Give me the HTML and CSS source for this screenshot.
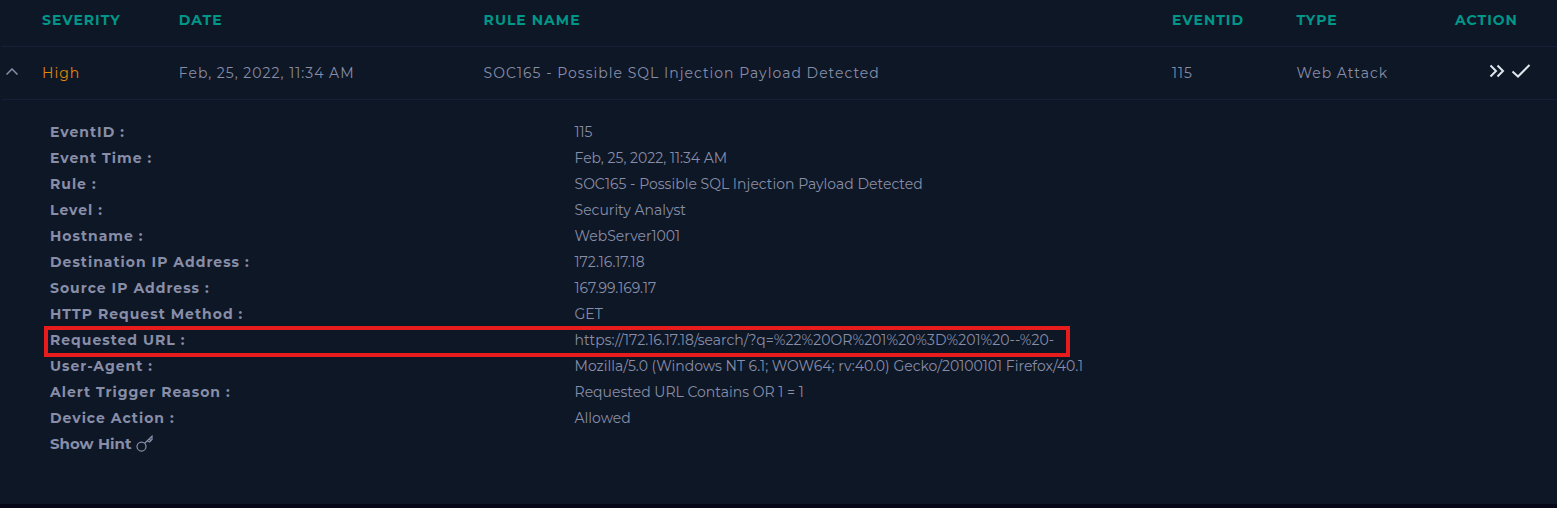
FILE: index.html
```html
<!DOCTYPE html>
<html lang="en">
<head>
<meta charset="utf-8">
<title>Alerts</title>
<link rel="stylesheet" href="styles.css">
</head>
<body>
<main class="panel">
  <table class="alerts">
    <colgroup>
      <col class="col-toggle"><col class="col-severity"><col class="col-date"><col class="col-rule"><col class="col-id"><col class="col-type"><col class="col-action">
    </colgroup>
    <thead>
      <tr>
        <th></th><th>SEVERITY</th><th>DATE</th><th>RULE NAME</th><th>EVENTID</th><th>TYPE</th><th>ACTION</th>
      </tr>
    </thead>
    <tbody>
      <tr class="alert-row">
        <td class="toggle-cell"><button class="icon-button" aria-label="Collapse" aria-expanded="true"><svg width="12" height="8" viewBox="0 0 12 8"><path d="M.5 6.500 6 1l5.500 5.500" /></svg></button></td>
        <td class="high">High</td>
        <td>Feb, 25, 2022, 11:34 AM</td>
        <td>SOC165 - Possible SQL Injection Payload Detected</td>
        <td>115</td>
        <td>Web Attack</td>
        <td>
          <div class="actions">
            <button class="icon-button" aria-label="Take ownership"><svg width="16" height="14" viewBox="0 0 16 14"><path d="M1.500 1.500 7 7l-5.500 5.500M8.500 1.500 14 7l-5.500 5.500" /></svg></button>
            <button class="icon-button" aria-label="Close alert"><svg width="20" height="14" viewBox="0 0 20 14"><path d="M1.500 7.500 7 12.500 18.500 1" /></svg></button>
          </div>
        </td>
      </tr>
    </tbody>
  </table>
  <section class="details">
    <dl class="fields">
      <div class="field"><dt>EventID :</dt><dd>115</dd></div>
      <div class="field"><dt>Event Time :</dt><dd>Feb, 25, 2022, 11:34 AM</dd></div>
      <div class="field"><dt>Rule :</dt><dd>SOC165 - Possible SQL Injection Payload Detected</dd></div>
      <div class="field"><dt>Level :</dt><dd>Security Analyst</dd></div>
      <div class="field"><dt>Hostname :</dt><dd>WebServer1001</dd></div>
      <div class="field"><dt>Destination IP Address :</dt><dd>172.16.17.18</dd></div>
      <div class="field"><dt>Source IP Address :</dt><dd>167.99.169.17</dd></div>
      <div class="field"><dt>HTTP Request Method :</dt><dd>GET</dd></div>
      <div class="field marked"><dt>Requested URL :</dt><dd>https://172.16.17.18/search/?q=%22%20OR%201%20%3D%201%20--%20-</dd></div>
      <div class="field"><dt>User-Agent :</dt><dd>Mozilla/5.0 (Windows NT 6.1; WOW64; rv:40.0) Gecko/20100101 Firefox/40.1</dd></div>
      <div class="field"><dt>Alert Trigger Reason :</dt><dd>Requested URL Contains OR 1 = 1</dd></div>
      <div class="field"><dt>Device Action :</dt><dd>Allowed</dd></div>
    </dl>
    <button class="hint">Show Hint <svg width="18" height="18" viewBox="0 0 18 18"><circle cx="5.500" cy="11.500" r="4.500" /><path d="M8.700 8.300 16 1.200V4.500L13.500 7 11.300 5.800M13.200 4l1.600 1.700" /></svg></button>
  </section>
</main>
</body>
</html>
```
FILE: styles.css
```css
* { box-sizing: border-box; }

body {
  margin: 0;
  min-height: 100vh;
  background: #0e1726;
  color: #888ea8;
  font: 14px/26px Montserrat, Inter, sans-serif;
  border-bottom: 4px solid #060818;
}

button {
  padding: 0;
  border: 0;
  background: none;
  color: inherit;
  font: inherit;
  cursor: pointer;
}

svg {
  display: block;
  fill: none;
  stroke: currentColor;
}

.alerts {
  width: 100%;
  padding-left: 2px;
  border-spacing: 0;
  table-layout: fixed;
  letter-spacing: 1px;
}

.alerts th,
.alerts td {
  padding: 0;
  border-bottom: 1px solid #191e3a;
  text-align: left;
  white-space: nowrap;
}

.alerts th {
  height: 47px;
  padding-bottom: 6px;
  color: #009688;
  font-weight: 700;
}

.alerts td { height: 53px; }

.col-toggle { width: 40px; }
.col-severity { width: 8.8%; }
.col-date { width: 19.6%; }
.col-id { width: 8%; }
.col-type { width: 10.2%; }
.col-action { width: 102px; }

.alerts .toggle-cell { padding: 0 0 4px 4px; }
.toggle-cell svg { stroke-width: 1.5; }
.alerts .high { color: #e2880b; }

.actions {
  display: flex;
  justify-content: flex-end;
  gap: 6px;
  padding: 0 26px 4px 0;
  color: #e0e6ed;
}

.actions svg { stroke-width: 2; }

.details { padding: 19px 50px 40px; }

.fields { margin: 0; }

.field {
  position: relative;
  display: grid;
  grid-template-columns: 36% 1fr;
}

.field dt {
  font-weight: 700;
  letter-spacing: 1px;
}

.field dd { margin: 0; }

.marked::after {
  content: "";
  position: absolute;
  inset: -1px 30% -4px -6px;
  border: 4px solid #e81c1c;
}

.hint {
  display: flex;
  align-items: center;
  gap: 5px;
  font-size: 15px;
  font-weight: 700;
}

.hint svg { stroke-width: 1.25; }
```
